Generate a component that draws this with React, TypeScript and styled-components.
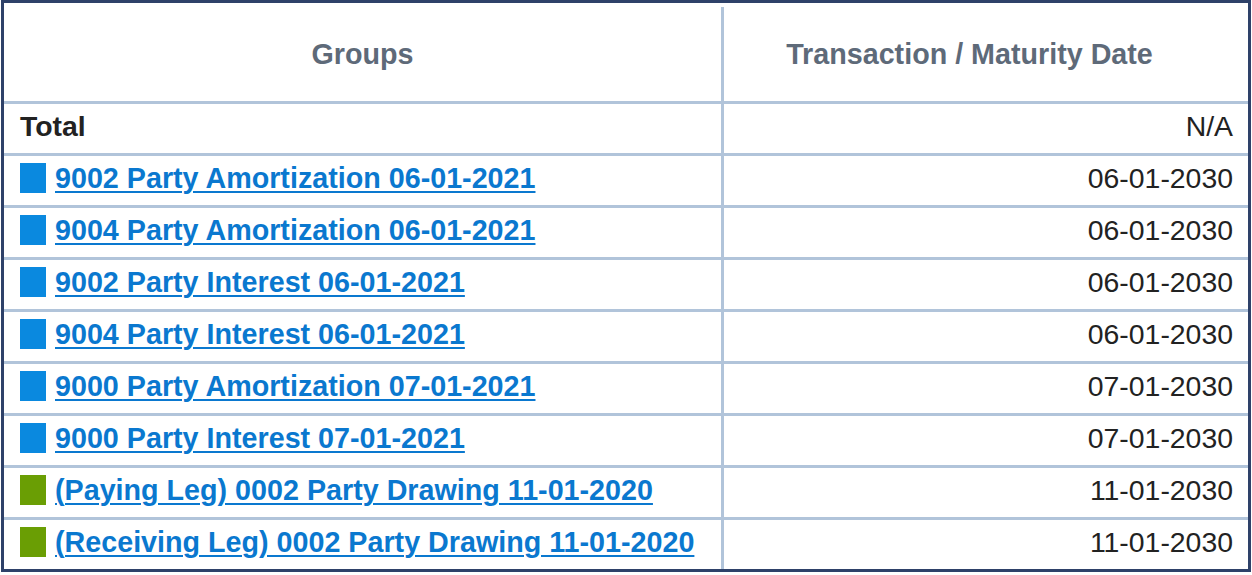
import styled, { createGlobalStyle } from 'styled-components'

const GlobalStyle = createGlobalStyle`
   body {
      margin: 0;
      background: #ffffff;
      font-family: "Liberation Sans", Arial, sans-serif;
   }
`

const Table = styled.div`
   box-sizing: border-box;
   width: 1250px;
   margin-left: 1px;
   padding-top: 4px;
   border: 3px solid #2e4169;
   background: #ffffff;
`

const Row = styled.div<{ $head?: boolean; $last?: boolean }>`
   display: grid;
   grid-template-columns: 720px 1fr;
   height: ${(p) => (p.$head ? '94px' : '49px')};
   border-bottom: ${(p) => (p.$last ? 'none' : '3px solid #b1c4da')};
`

const HeadCell = styled.div<{ $first?: boolean; $padRight?: number }>`
   box-sizing: border-box;
   display: flex;
   align-items: center;
   justify-content: center;
   padding-right: ${(p) => p.$padRight ?? 0}px;
   border-right: ${(p) => (p.$first ? '3px solid #b1c4da' : 'none')};
   font-size: 28.7px;
   font-weight: bold;
   color: #5e6a79;
`

const GroupCell = styled.div`
   box-sizing: border-box;
   display: flex;
   align-items: center;
   padding: 0 0 5px 16px;
   border-right: 3px solid #b1c4da;
   font-size: 28.4px;
   color: #222222;
`

const DateCell = styled.div`
   box-sizing: border-box;
   display: flex;
   align-items: center;
   justify-content: flex-end;
   padding: 0 15px 5px 0;
   font-size: 28.4px;
   color: #222222;
`

const TotalLabel = styled.span`
   font-weight: bold;
`

const Swatch = styled.span<{ $color: string }>`
   display: inline-block;
   flex: none;
   width: 26px;
   height: 30px;
   margin-right: 9px;
   background: ${(p) => p.$color};
`

const GroupLink = styled.a`
   font-size: 28.7px;
   font-weight: bold;
   color: #0a78cf;
   text-decoration: underline;
   text-decoration-thickness: 2px;
   text-underline-offset: 3px;
   cursor: pointer;
   white-space: nowrap;
`

interface Group {
   name: string
   date: string
   color: string
}

const BLUE = '#0a89df'
const GREEN = '#6a9e04'

const groups: Group[] = [
   { name: '9002 Party Amortization 06-01-2021', date: '06-01-2030', color: BLUE },
   { name: '9004 Party Amortization 06-01-2021', date: '06-01-2030', color: BLUE },
   { name: '9002 Party Interest 06-01-2021', date: '06-01-2030', color: BLUE },
   { name: '9004 Party Interest 06-01-2021', date: '06-01-2030', color: BLUE },
   { name: '9000 Party Amortization 07-01-2021', date: '07-01-2030', color: BLUE },
   { name: '9000 Party Interest 07-01-2021', date: '07-01-2030', color: BLUE },
   { name: '(Paying Leg) 0002 Party Drawing 11-01-2020', date: '11-01-2030', color: GREEN },
   { name: '(Receiving Leg) 0002 Party Drawing 11-01-2020', date: '11-01-2030', color: GREEN },
]

export default function App() {
   return (
      <>
         <GlobalStyle />
         <Table>
            <Row $head>
               <HeadCell $first>Groups</HeadCell>
               <HeadCell $padRight={33}>Transaction / Maturity Date</HeadCell>
            </Row>
            <Row>
               <GroupCell>
                  <TotalLabel>Total</TotalLabel>
               </GroupCell>
               <DateCell>N/A</DateCell>
            </Row>
            {groups.map((group, index) => (
               <Row key={index} $last={index === groups.length - 1}>
                  <GroupCell>
                     <Swatch $color={group.color} />
                     <GroupLink>{group.name}</GroupLink>
                  </GroupCell>
                  <DateCell>{group.date}</DateCell>
               </Row>
            ))}
         </Table>
      </>
   )
}
